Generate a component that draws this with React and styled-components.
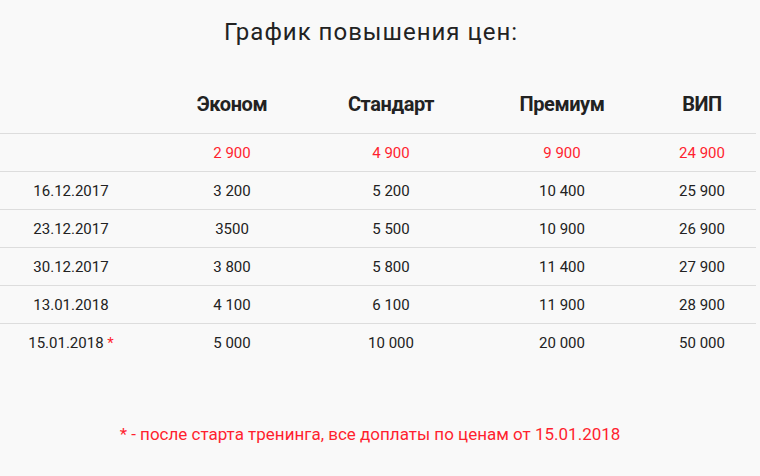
import React from "react";
import styled, { createGlobalStyle } from "styled-components";

const Global = createGlobalStyle`
  html, body { margin: 0; padding: 0; background: #f9f9f9; }
  body { font-family: Roboto, "Noto Sans", sans-serif; color: #222; }
`;

const Page = styled.div`
  width: 756px;
  padding-top: 18px;
  display: flex;
  flex-direction: column;
`;

const Title = styled.h2`
  margin: 0;
  text-align: center;
  font-weight: 400;
  font-size: 24px;
  line-height: 28px;
  letter-spacing: 1px;
  color: #222;
  padding-right: 14px;
`;

const Table = styled.div`
  margin-top: 44px;
  display: flex;
  flex-direction: column;
`;

const Row = styled.div`
  display: grid;
  grid-template-columns: 142px 180px 138px 204px 76px;
  padding-right: 16px;
  height: ${(p) => (p.$head ? 43 : 37)}px;
  align-items: center;
  border-bottom: 1px solid ${(p) => (p.$last ? "transparent" : "#dddddd")};
`;

const HeadCell = styled.div`
  text-align: center;
  font-weight: 700;
  font-size: 20px;
  color: #222;
  letter-spacing: -0.4px;
  padding-bottom: 15px;
`;

const Cell = styled.div`
  text-align: center;
  font-size: 15px;
  color: ${(p) => (p.$red ? "#ff1f2f" : "#222")};
`;

const Star = styled.span`
  color: #ff1f2f;
`;

const Note = styled.p`
  margin: 62px 0 0;
  text-align: center;
  font-size: 17px;
  color: #ff1f2f;
  padding-right: 16px;
`;

const rows = [
  ["", "2 900", "4 900", "9 900", "24 900", true],
  ["16.12.2017", "3 200", "5 200", "10 400", "25 900"],
  ["23.12.2017", "3500", "5 500", "10 900", "26 900"],
  ["30.12.2017", "3 800", "5 800", "11 400", "27 900"],
  ["13.01.2018", "4 100", "6 100", "11 900", "28 900"],
];

export default function App() {
  return (
    <>
      <Global />
      <Page>
        <Title>График повышения цен:</Title>
        <Table>
          <Row $head>
            <HeadCell />
            <HeadCell>Эконом</HeadCell>
            <HeadCell>Стандарт</HeadCell>
            <HeadCell>Премиум</HeadCell>
            <HeadCell>ВИП</HeadCell>
          </Row>
          {rows.map((r, i) => (
            <Row key={i}>
              <Cell>{r[0]}</Cell>
              <Cell $red={r[5]}>{r[1]}</Cell>
              <Cell $red={r[5]}>{r[2]}</Cell>
              <Cell $red={r[5]}>{r[3]}</Cell>
              <Cell $red={r[5]}>{r[4]}</Cell>
            </Row>
          ))}
          <Row $last>
            <Cell>
              15.01.2018 <Star>*</Star>
            </Cell>
            <Cell>5 000</Cell>
            <Cell>10 000</Cell>
            <Cell>20 000</Cell>
            <Cell>50 000</Cell>
          </Row>
        </Table>
        <Note>* - после старта тренинга, все доплаты по ценам от 15.01.2018</Note>
      </Page>
    </>
  );
}
